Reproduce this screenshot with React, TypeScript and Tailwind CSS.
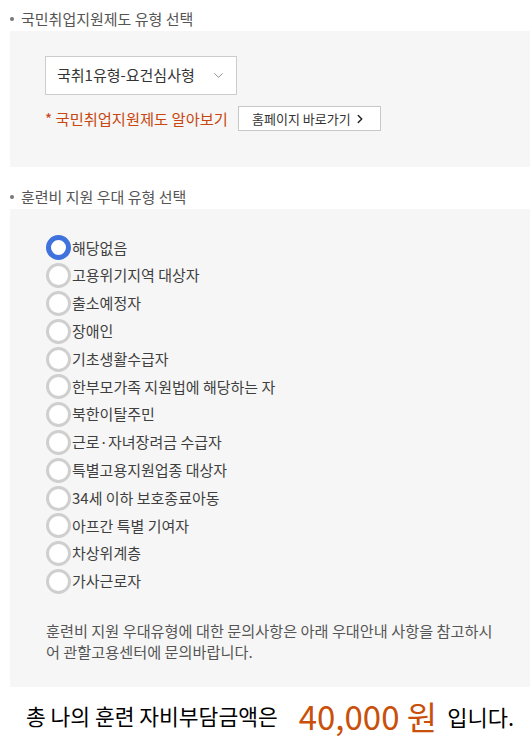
import { ChevronDown, ChevronRight } from "lucide-react";

const options = [
  "해당없음",
  "고용위기지역 대상자",
  "출소예정자",
  "장애인",
  "기초생활수급자",
  "한부모가족 지원법에 해당하는 자",
  "북한이탈주민",
  "근로·자녀장려금 수급자",
  "특별고용지원업종 대상자",
  "34세 이하 보호종료아동",
  "아프간 특별 기여자",
  "차상위계층",
  "가사근로자",
];

function SectionTitle({ children }: { children: string }) {
  return (
    <div className="flex h-6 items-center gap-[7px] pl-[10px] text-[15px] text-[#555]">
      <span className="h-[4px] w-[4px] rounded-full bg-[#777]" />
      <span>{children}</span>
    </div>
  );
}

function Radio({ label, checked }: { label: string; checked?: boolean }) {
  return (
    <label className="flex h-[27.8px] items-center gap-[1px] text-[15px] text-[#3f3f3f]">
      <span
        className={
          checked
            ? "h-[25px] w-[25px] shrink-0 rounded-full border-[5px] border-[#3f72dc] bg-white"
            : "h-[25px] w-[25px] shrink-0 rounded-full border-[3px] border-[#cfcfcf] bg-white"
        }
      />
      <span>{label}</span>
    </label>
  );
}

export default function App() {
  return (
    <div
      className="w-[530px] bg-white pt-[7px]"
      style={{ fontFamily: '"Noto Sans CJK KR", "Noto Sans", sans-serif' }}
    >
      <SectionTitle>국민취업지원제도 유형 선택</SectionTitle>
      <div className="ml-[10px] h-[136px] bg-[#f6f6f6] px-[35px] pt-[25px]">
        <div className="flex h-[39px] w-[192px] items-center justify-between border border-[#cccccc] bg-white pl-[11px] pr-[10px] text-[15px] text-[#333]">
          <span>국취1유형-요건심사형</span>
          <ChevronDown size={15} strokeWidth={1.5} className="text-[#888]" />
        </div>
        <div className="mt-[11px] flex items-center gap-[10px]">
          <span className="text-[15.3px] text-[#c8460f]">
            * 국민취업지원제도 알아보기
          </span>
          <button className="flex h-[25px] w-[143px] items-center justify-center gap-[2px] border border-[#c8c8c8] bg-white text-[13px] text-[#333]">
            <span>홈페이지 바로가기</span>
            <ChevronRight size={14} strokeWidth={2.5} className="text-[#222]" />
          </button>
        </div>
      </div>

      <div className="mt-[18px]">
        <SectionTitle>훈련비 지원 우대 유형 선택</SectionTitle>
      </div>
      <div className="ml-[10px] h-[478px] bg-[#f6f6f6] px-[36px] pt-[25px]">
        <div className="flex flex-col">
          {options.map((o, i) => (
            <Radio key={o} label={o} checked={i === 0} />
          ))}
        </div>
        <p className="mt-[25px] text-[15.2px] leading-[21px] text-[#555]">
          훈련비 지원 우대유형에 대한 문의사항은 아래 우대안내 사항을 참고하시어
          관할고용센터에 문의바랍니다.
        </p>
      </div>

      <div className="flex h-[58px] items-center justify-center pl-[10px] text-black">
        <span className="text-[21.5px]">총 나의 훈련 자비부담금액은</span>
        <span className="ml-[21px] text-[33px] leading-none text-[#c9500a]">40,000 원</span>
        <span className="ml-[10px] text-[22px]">입니다.</span>
      </div>
    </div>
  );
}
